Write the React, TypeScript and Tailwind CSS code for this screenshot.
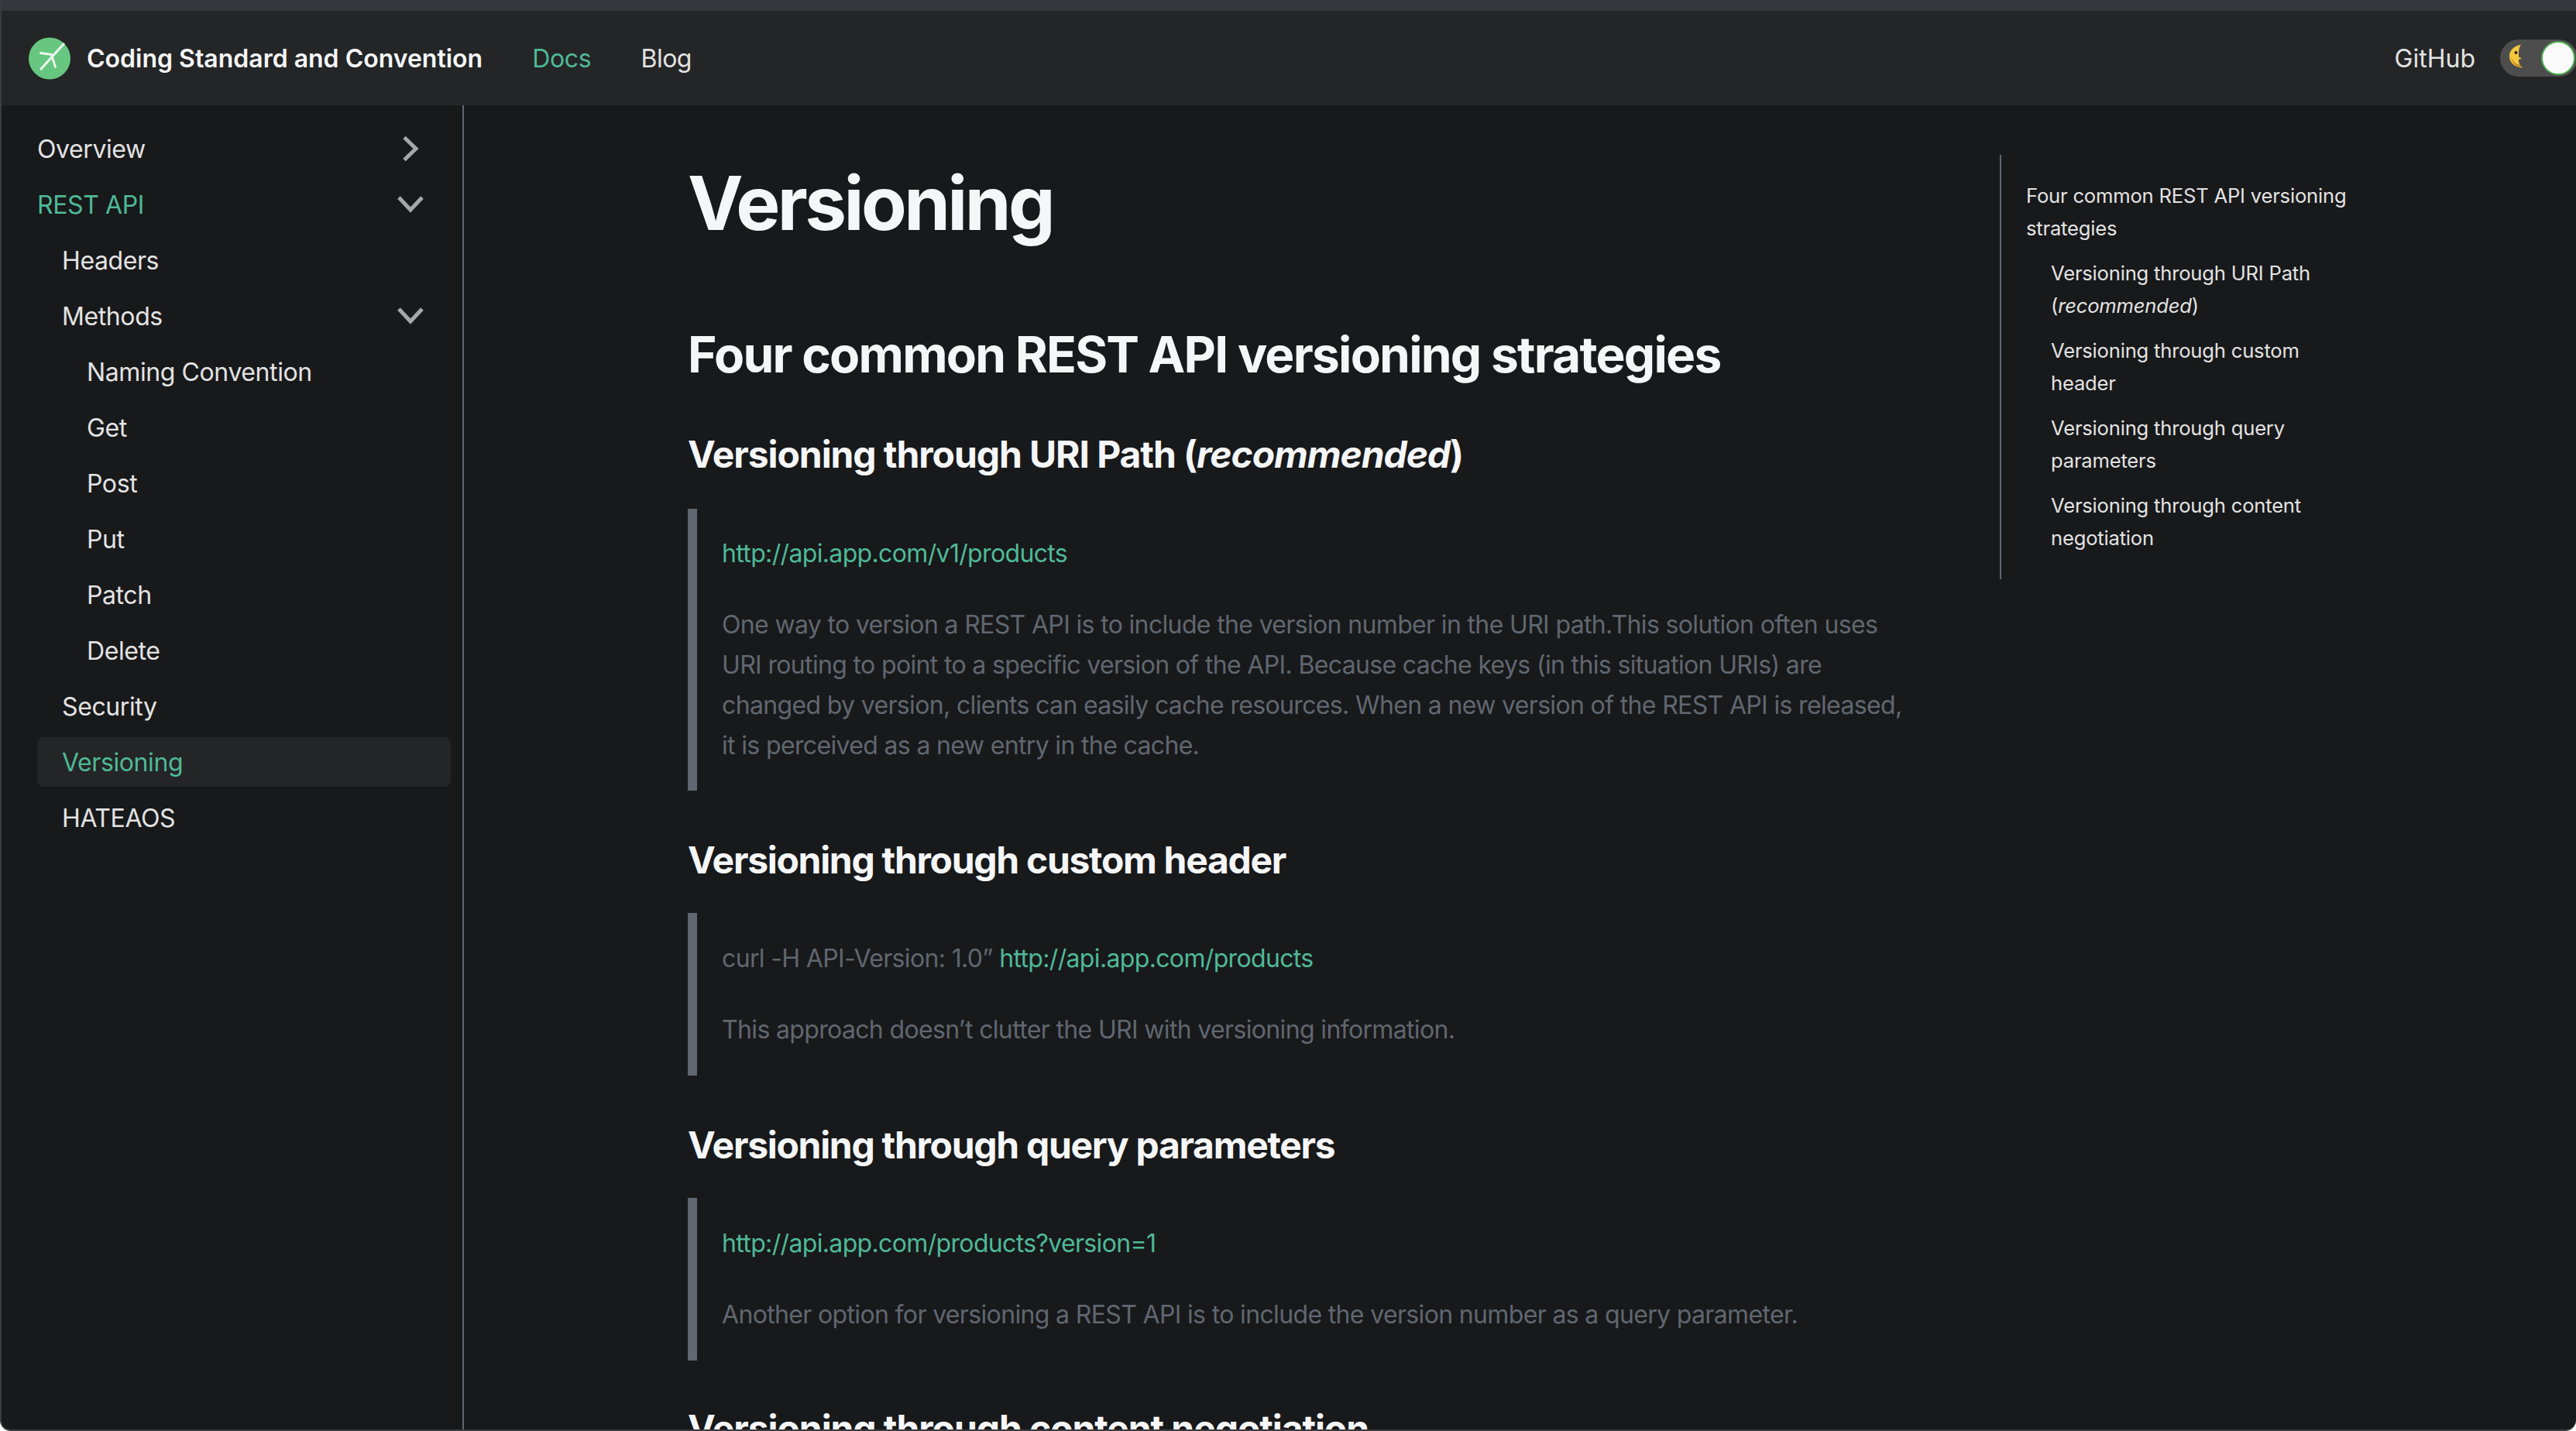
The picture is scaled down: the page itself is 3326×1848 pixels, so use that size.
const SANS = "font-['Inter','Liberation_Sans',sans-serif]";

function Chevron({ open }: { open?: boolean }) {
  return (
    <svg width="40" height="40" viewBox="0 0 40 40" fill="none" className="shrink-0">
      {open ? (
        <path d="M5 11 L20 27 L35 11" stroke="#a6a7a8" strokeWidth="5" />
      ) : (
        <path d="M12 5.5 L27 20 L12 34.5" stroke="#a6a7a8" strokeWidth="5" />
      )}
    </svg>
  );
}

function Row({ label, pad, active, current, chevron }: { label: string; pad: string; active?: boolean; current?: boolean; chevron?: "open" | "closed" }) {
  return (
    <div className={`flex h-16 w-[534px] items-center justify-between rounded-[8px] pr-[32px] ${pad} ${current ? "bg-[#242526]" : ""} ${active || current ? "text-[#4fb997]" : "text-[#e3e3e3]"}`}>
      <span className="relative top-[1px]">{label}</span>
      {chevron && <Chevron open={chevron === "open"} />}
    </div>
  );
}

function Quote({ children, className }: { children: React.ReactNode; className: string }) {
  return <div className={`flex flex-col gap-[40px] border-l-[12px] border-[#606770] pl-[32px] text-[#606770] ${className}`}>{children}</div>;
}

const Link = ({ children }: { children: React.ReactNode }) => <span className="text-[#4fb997]">{children}</span>;

function TocItem({ children, sub }: { children: React.ReactNode; sub?: boolean }) {
  return <div className={`${sub ? "pl-[32px]" : ""}`}>{children}</div>;
}

export default function App() {
  return (
    <div className={`h-[1848px] w-[3326px] overflow-hidden rounded-b-[14px] border-b-2 border-l-2 border-[#3a3b3f] bg-[#18191b] ${SANS}`}>
      <div className="h-[14px] bg-[#36373c]" />
      <header className="flex h-[122px] items-center bg-[#242526] text-[32px] text-[#e3e3e3]">
        <div className="ml-[35px] mr-[21px] h-[55px] w-[54px] shrink-0">
          <svg viewBox="0 0 54 55" className="h-full w-full">
            <circle cx="27" cy="27.5" r="27" fill="#67c780" />
            <g stroke="#eaf7ec" fill="none" strokeLinecap="round">
              <path d="M45 9 L16 41" strokeWidth="3.2" />
              <path d="M15.5 20.5 L30 22.5" strokeWidth="3" />
              <path d="M29.5 23 L34.5 38.5" strokeWidth="2.8" />
            </g>
          </svg>
        </div>
        <div className="relative top-[1px] font-semibold text-[#f5f6f7]">Coding Standard and Convention</div>
        <div className="relative top-[1px] ml-[64px] tracking-[-0.3px] text-[#4fb997]">Docs</div>
        <div className="relative top-[1px] ml-[64px] tracking-[-0.5px]">Blog</div>
        <div className="relative top-[1px] ml-auto">GitHub</div>
        <div className="relative ml-[32px] mr-[-2px] h-12 w-[100px] shrink-0 rounded-full bg-[#4d4d4d]">
          <svg viewBox="0 0 20 32" className="absolute left-[11px] top-[5px] h-[33px] w-[20px]">
            <path d="M16 1 C6 3 1 9 1 16 C1 24 7 30 18 31 C14 28 13 24 13 20.5 L17 19 L13 17 C13 10 13 5 16 1 Z" fill="#f4c73e" />
            <path d="M14 27 C8 26 4 22 3 15 C3 24 8 29 17 30.5 Z" fill="#c68a1e" />
            <circle cx="9.5" cy="11.5" r="2" fill="#2b2118" />
          </svg>
          <span className="absolute left-[53px] top-[2px] h-[44px] w-[44px] rounded-full border-2 border-[#4caf50] bg-[#fafafa]" />
        </div>
      </header>
      <div className="flex h-[1712px]">
        <aside className="flex h-full w-[597px] shrink-0 flex-col gap-2 border-r-2 border-[#606770] pl-[46px] pt-6 text-[32px] leading-[40px] tracking-[-0.4px]">
          <Row label="Overview" pad="" chevron="closed" />
          <Row label="REST API" pad="" active chevron="open" />
          <Row label="Headers" pad="pl-[32px]" />
          <Row label="Methods" pad="pl-[32px]" chevron="open" />
          <Row label="Naming Convention" pad="pl-[64px]" />
          <Row label="Get" pad="pl-[64px]" />
          <Row label="Post" pad="pl-[64px]" />
          <Row label="Put" pad="pl-[64px]" />
          <Row label="Patch" pad="pl-[64px]" />
          <Row label="Delete" pad="pl-[64px]" />
          <Row label="Security" pad="pl-[32px]" />
          <Row label="Versioning" pad="pl-[32px]" current />
          <Row label="HATEAOS" pad="pl-[32px]" />
        </aside>
        <main className="ml-[289px] w-[1572px] shrink-0 text-[32px] leading-[52px] tracking-[-0.65px]">
          <h1 className="mt-[66px] text-[96px] font-bold leading-[120px] tracking-[-3.6px] text-[#f5f6f7]">Versioning</h1>
          <h2 className="mt-[96px] text-[64px] font-bold leading-[80px] tracking-[-1.77px] text-[#f5f6f7]">Four common REST API versioning strategies</h2>
          <h3 className="mt-[59px] text-[48px] font-bold leading-[60px] tracking-[-1.09px] text-[#f5f6f7]">
            Versioning through URI Path (<em>recommended</em>)
          </h3>
          <Quote className="mt-[40px] h-[364px] justify-center">
            <div><Link>http://api.app.com/v1/products</Link></div>
            <div>One way to version a REST API is to include the version number in the URI path.This solution often uses URI routing to point to a specific version of the API. Because cache keys (in this situation URIs) are changed by version, clients can easily cache resources. When a new version of the REST API is released, it is perceived as a new entry in the cache.</div>
          </Quote>
          <h3 className="mt-[60px] text-[48px] font-bold leading-[60px] tracking-[-1.3px] text-[#f5f6f7]">Versioning through custom header</h3>
          <Quote className="mt-[38px] h-[210px] justify-center">
            <div>curl -H API-Version: 1.0” <Link>http://api.app.com/products</Link></div>
            <div>This approach doesn’t clutter the URI with versioning information.</div>
          </Quote>
          <h3 className="mt-[60px] text-[48px] font-bold leading-[60px] tracking-[-1.3px] text-[#f5f6f7]">Versioning through query parameters</h3>
          <Quote className="mt-[38px] h-[210px] justify-center">
            <div><Link>http://api.app.com/products?version=1</Link></div>
            <div>Another option for versioning a REST API is to include the version number as a query parameter.</div>
          </Quote>
          <h3 className="mt-[58px] text-[48px] font-bold leading-[60px] tracking-[-1.09px] text-[#f5f6f7]">Versioning through content negotiation</h3>
        </main>
        <nav className="ml-[122px] mt-[64px] flex h-[548px] w-[490px] shrink-0 flex-col gap-4 border-l-2 border-[#606770] pl-[32px] pr-[30px] pt-[32px] text-[25.6px] leading-[42px] tracking-[-0.2px] text-[#e3e3e3]">
          <TocItem>Four common REST API versioning strategies</TocItem>
          <TocItem sub>Versioning through URI Path (<em>recommended</em>)</TocItem>
          <TocItem sub>Versioning through custom header</TocItem>
          <TocItem sub>Versioning through query parameters</TocItem>
          <TocItem sub>Versioning through content negotiation</TocItem>
        </nav>
      </div>
    </div>
  );
}
